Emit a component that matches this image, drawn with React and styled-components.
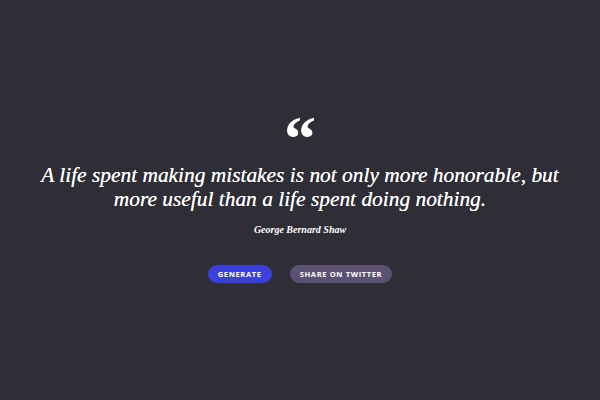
import React from 'react';
import styled, { createGlobalStyle } from 'styled-components';

const GlobalStyle = createGlobalStyle`
  html, body {
    margin: 0;
    padding: 0;
    background: #2f2d36;
  }
`;

const Page = styled.div`
  width: 600px;
  height: 400px;
  background: #2f2d36;
  display: flex;
  align-items: center;
  justify-content: center;
`;

const Box = styled.div`
  display: flex;
  flex-direction: column;
  align-items: center;
  text-align: center;
  color: #fff;
  margin-top: 2px;
`;

const QuoteMark = styled.div`
  font-family: 'Liberation Serif', serif;
  font-weight: 700;
  font-size: 64px;
  line-height: 40px;
  height: 40px;
  margin-bottom: 4px;
`;

const Text = styled.p`
  font-family: 'Liberation Serif', serif;
  font-style: italic;
  font-size: 21.4px;
  line-height: 24px;
  margin: 0;
  width: 540px;
  text-shadow: 0 0 0.4px #fff;
`;

const Author = styled.p`
  font-family: 'Liberation Serif', serif;
  font-style: italic;
  font-weight: 700;
  font-size: 10px;
  margin: 13px 0 0;
`;

const Actions = styled.div`
  display: flex;
  gap: 18px;
  margin-top: 30px;
`;

const Button = styled.button`
  border: none;
  height: 18px;
  padding: 0 10px;
  border-radius: 9px;
  background: ${(p) => p.bg};
  color: #fff;
  font-family: 'Open Sans', sans-serif;
  font-weight: 700;
  font-size: 7.6px;
  letter-spacing: 0.6px;
  text-transform: uppercase;
`;

export default function App() {
  return (
    <>
      <GlobalStyle />
      <Page>
        <Box>
          <QuoteMark>“</QuoteMark>
          <Text>
            A life spent making mistakes is not only more honorable, but
            <br />
            more useful than a life spent doing nothing.
          </Text>
          <Author>George Bernard Shaw</Author>
          <Actions>
            <Button bg="#3b3fdb">Generate</Button>
            <Button bg="#5b5273">Share on Twitter</Button>
          </Actions>
        </Box>
      </Page>
    </>
  );
}
